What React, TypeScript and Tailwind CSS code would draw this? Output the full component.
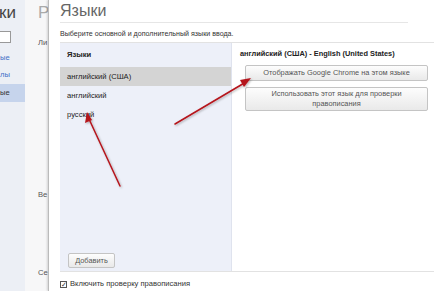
import React from 'react'

const font = { fontFamily: '"Liberation Sans", Arial, sans-serif' }

function Btn({ children, className = '' }: { children: React.ReactNode; className?: string }) {
  return (
    <div
      className={`flex items-center justify-center text-center rounded-[2px] border border-[#c4c4c4] bg-gradient-to-b from-[#fdfdfd] to-[#e9e9e9] text-[7.4px] leading-[10px] text-[#555] ${className}`}
    >
      {children}
    </div>
  )
}

function Arrows() {
  return (
    <svg className="absolute inset-0 pointer-events-none" width="434" height="291" viewBox="0 0 434 291">
      <defs>
        <filter id="sh" x="-20%" y="-20%" width="140%" height="140%">
          <feDropShadow dx="1" dy="1" stdDeviation="0.8" floodColor="#000" floodOpacity="0.3" />
        </filter>
      </defs>
      <g filter="url(#sh)" fill="#b5141c" stroke="#b5141c" strokeLinecap="round">
        <line x1="175" y1="124" x2="246" y2="82" strokeWidth="1.5" />
        <polygon points="251,78 240,80 244,87" stroke="none" />
        <line x1="120" y1="186" x2="89" y2="119" strokeWidth="1.5" />
        <polygon points="87,112 85,123 92,120" stroke="none" />
      </g>
    </svg>
  )
}

export default function App() {
  return (
    <div style={font} className="relative flex w-[434px] h-[291px] overflow-hidden bg-white text-[#333]">
      {/* sidebar of the settings page */}
      <div className="w-[25px] shrink-0 bg-[#eceff5] flex flex-col">
        <div className="h-[28px] text-[17px] leading-[26px] text-[#444] ml-[-1px] whitespace-nowrap">ки</div>
        <div className="h-[12px] w-[11px] mt-[3px] bg-white border border-[#999] border-l-0" />
        <div className="mt-[10px] text-[7.6px] leading-[10px] text-[#3f6fc7] whitespace-nowrap">ые</div>
        <div className="mt-[7px] text-[7.6px] leading-[10px] text-[#3f6fc7] whitespace-nowrap">лы</div>
        <div className="mt-[4px] h-[18px] bg-[#c6d4ec] text-[7.6px] leading-[18px] text-[#333] whitespace-nowrap">ые</div>
      </div>

      {/* underlying page column */}
      <div className="w-[23px] shrink-0 bg-[#f7f7f8] flex flex-col pl-[13px] text-[#555]">
        <div className="h-[28px] text-[17px] leading-[26px] text-[#aaa] whitespace-nowrap">Р</div>
        <div className="mt-[10px] text-[7.6px] leading-[10px] whitespace-nowrap">Ли</div>
        <div className="mt-[142px] text-[7.6px] leading-[10px] whitespace-nowrap">Ве</div>
        <div className="mt-[68px] text-[7.6px] leading-[10px] whitespace-nowrap">Се</div>
      </div>

      {/* dialog */}
      <div className="flex-1 min-w-0 flex flex-col border-l border-[#bbb] shadow-[-1px_0_2px_rgba(0,0,0,0.15)] pl-[11px]">
        <div className="h-[22px] text-[16px] leading-[22px] text-[#666] whitespace-nowrap">Языки</div>
        <div className="h-px bg-[#e6e6e6] mr-[26px]" />
        <div className="mt-[6px] text-[7.1px] leading-[10px] text-[#333] whitespace-nowrap">
          Выберите основной и дополнительный языки ввода.
        </div>
        <div className="mt-[3px] flex h-[230px] border-t border-b border-[#e2e2e2]">
          <div className="w-[172px] shrink-0 bg-[#edf0f9] flex flex-col border-r border-[#dfe3ee]">
            <div className="h-[24px] pl-[7px] text-[7.6px] font-bold leading-[24px] text-[#222]">Языки</div>
            <div className="h-[19px] pl-[7px] bg-[#d4d4d4] text-[7.6px] leading-[19px] text-[#222]">английский (США)</div>
            <div className="h-[19px] pl-[7px] text-[7.6px] leading-[19px] text-[#222]">английский</div>
            <div className="h-[19px] pl-[7px] text-[7.6px] leading-[19px] text-[#222]">русский</div>
            <div className="flex-1" />
            <Btn className="ml-[8px] mb-[3px] w-[47px] h-[15px]">Добавить</Btn>
          </div>
          <div className="flex-1 min-w-0 flex flex-col pl-[8px] pr-[6px]">
            <div className="h-[22px] text-[7.4px] font-bold leading-[22px] text-[#222] whitespace-nowrap">
              английский (США) - English (United States)
            </div>
            <Btn className="ml-[5px] h-[16px]">Отображать Google Chrome на этом языке</Btn>
            <Btn className="ml-[5px] mt-[6px] h-[24px] px-[24px]">Использовать этот язык для проверки правописания</Btn>
          </div>
        </div>
        <div className="mt-[7px] flex items-center gap-[3px] text-[7.6px] leading-[10px] text-[#333]">
          <span className="w-[7px] h-[7px] border border-[#555] bg-white flex items-center justify-center text-[7px] leading-none">✓</span>
          <span>Включить проверку правописания</span>
        </div>
      </div>

      <Arrows />
    </div>
  )
}
